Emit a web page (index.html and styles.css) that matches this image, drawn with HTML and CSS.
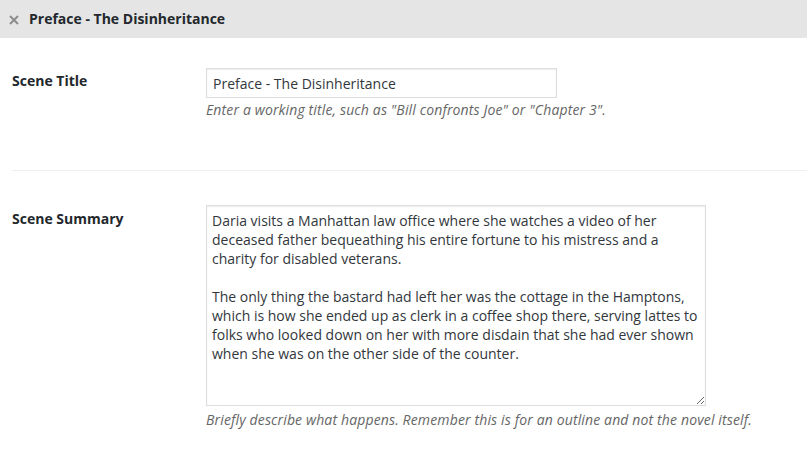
FILE: index.html
```html
<!DOCTYPE html>
<html>
<head>
<meta charset="utf-8">
<link rel="stylesheet" href="styles.css">
</head>
<body>
<div class="panel-header">
  <svg class="close-icon" width="10" height="10" viewBox="0 0 10 10"><path d="M1 1 L9 9 M9 1 L1 9" stroke="#8c8c8c" stroke-width="2" stroke-linecap="butt"/></svg>
  <span class="panel-title">Preface - The Disinheritance</span>
</div>
<div class="form">
  <div class="row row-title">
    <label class="label">Scene Title</label>
    <div class="field">
      <input class="text-input" type="text" value="Preface - The Disinheritance">
      <p class="desc">Enter a working title, such as "Bill confronts Joe" or "Chapter 3".</p>
    </div>
  </div>
  <div class="row row-summary">
    <label class="label">Scene Summary</label>
    <div class="field">
      <textarea class="text-area">Daria visits a Manhattan law office where she watches a video of her deceased father bequeathing his entire fortune to his mistress and a charity for disabled veterans.

The only thing the bastard had left her was the cottage in the Hamptons, which is how she ended up as clerk in a coffee shop there, serving lattes to folks who looked down on her with more disdain that she had ever shown when she was on the other side of the counter.</textarea>
      <p class="desc">Briefly describe what happens. Remember this is for an outline and not the novel itself.</p>
    </div>
  </div>
</div>
</body>
</html>
```

FILE: styles.css
```css
html, body {
  margin: 0;
  padding: 0;
  background: #fff;
  font-family: "Open Sans", "Noto Sans", sans-serif;
  font-size: 14px;
  color: #23282d;
}
.panel-header {
  height: 38px;
  background: #e5e5e5;
  display: flex;
  align-items: center;
  padding-left: 9px;
  box-sizing: border-box;
}
.close-icon {
  display: block;
  margin-right: 10px;
  margin-top: 1px;
}
.panel-title {
  font-weight: 700;
  font-size: 14px;
  color: #23282d;
  line-height: 20px;
}
.form {
  padding-left: 12px;
}
.row {
  display: grid;
  grid-template-columns: 194px 1fr;
}
.row-title {
  padding-top: 30px;
  padding-bottom: 50px;
  border-bottom: 1px solid #eeeeee;
}
.row-summary {
  padding-top: 34px;
}
.label {
  font-weight: 700;
  line-height: 20px;
  padding-top: 3px;
  color: #23282d;
}
.row-summary .label {
  padding-top: 4px;
}
.field {
  display: flex;
  flex-direction: column;
  align-items: flex-start;
}
.text-input {
  width: 351px;
  height: 30px;
  box-sizing: border-box;
  margin: 0;
  border: 1px solid #ddd;
  box-shadow: inset 0 1px 2px rgba(0,0,0,.07);
  padding: 0 6px;
  font-family: "Open Sans", "Noto Sans", sans-serif;
  font-size: 14px;
  color: #32373c;
  background: #fff;
  outline: none;
}
.text-area {
  width: 500px;
  height: 201px;
  box-sizing: border-box;
  margin: 0;
  border: 1px solid #ddd;
  box-shadow: inset 0 1px 2px rgba(0,0,0,.07);
  padding: 5px 5px;
  font-family: "Open Sans", "Noto Sans", sans-serif;
  font-size: 14px;
  line-height: 19px;
  color: #32373c;
  background: #fff;
  resize: both;
  overflow: hidden;
  outline: none;
}
.desc {
  margin: 2px 0 0 0;
  font-style: italic;
  color: #666;
  font-size: 14px;
  line-height: 20px;
  letter-spacing: 0.14px;
}
.row-summary .desc {
  margin-top: 4px;
}
```
